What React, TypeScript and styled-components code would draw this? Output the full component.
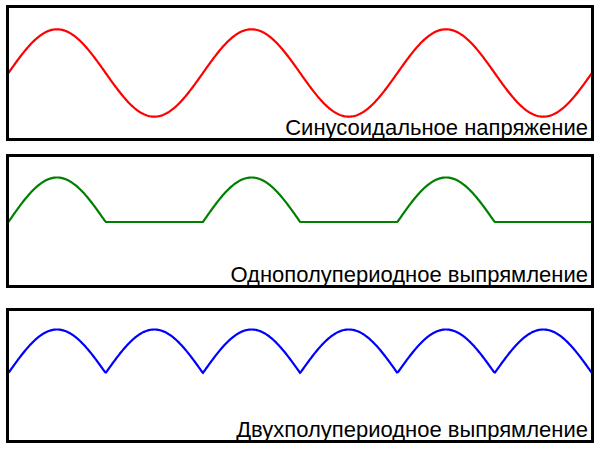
import React from 'react';
import styled, { createGlobalStyle } from 'styled-components';

const GlobalStyle = createGlobalStyle`
  html, body {
    margin: 0;
    padding: 0;
    background: #fff;
  }
  body {
    font-family: "Liberation Sans", Arial, sans-serif;
  }
`;

const Page = styled.div`
  width: 600px;
  height: 449px;
  padding: 5px 6px 0 6px;
  box-sizing: border-box;
  display: flex;
  flex-direction: column;
  background: #fff;
`;

const Panel = styled.div<{ $height: number; $gap: number }>`
  box-sizing: border-box;
  height: ${(p) => p.$height}px;
  margin-top: ${(p) => p.$gap}px;
  border: 3px solid #000;
  display: grid;
  grid-template-areas: 'stack';
  overflow: hidden;
`;

const Plot = styled.svg`
  grid-area: stack;
  display: block;
  width: 100%;
  height: 100%;
`;

const Caption = styled.div`
  grid-area: stack;
  align-self: end;
  justify-self: end;
  padding-right: 3px;
  font-size: 22px;
  line-height: 20px;
  color: #000;
  white-space: nowrap;
`;

type Mode = 'sine' | 'half' | 'full';

const PERIOD = 194.5;
const PHASE = 8.4;

// builds the polyline of one waveform in page coordinates
const wavePoints = (mode: Mode, center: number, amp: number) => {
  const pts: string[] = [];
  for (let x = 6; x <= 594; x += 1) {
    const s = Math.sin((2 * Math.PI * (x - PHASE)) / PERIOD);
    let y = center;
    if (mode === 'sine') y = center - amp * s;
    if (mode === 'half') y = center - amp * Math.max(0, s);
    if (mode === 'full') y = center - amp * Math.abs(s);
    pts.push(`${x},${y.toFixed(2)}`);
  }
  return pts.join(' ');
};

interface WaveProps {
  top: number;
  height: number;
  gap: number;
  mode: Mode;
  center: number;
  amp: number;
  color: string;
  label: string;
}

const Wave: React.FC<WaveProps> = ({ top, height, gap, mode, center, amp, color, label }) => {
  const innerTop = top + 3;
  const innerHeight = height - 6;
  return (
    <Panel $height={height} $gap={gap}>
      <Plot viewBox={`9 ${innerTop} 582 ${innerHeight}`} preserveAspectRatio="none">
        <polyline
          points={wavePoints(mode, center, amp)}
          fill="none"
          stroke={color}
          strokeWidth={2.2}
          strokeLinejoin="miter"
        />
      </Plot>
      <Caption>{label}</Caption>
    </Panel>
  );
};

export default function App() {
  return (
    <>
      <GlobalStyle />
      <Page>
        <Wave
          top={5}
          height={136}
          gap={0}
          mode="sine"
          center={73}
          amp={43.7}
          color="#ff0000"
          label="Синусоидальное напряжение"
        />
        <Wave
          top={154}
          height={134}
          gap={13}
          mode="half"
          center={222}
          amp={44.5}
          color="#008000"
          label="Однополупериодное выпрямление"
        />
        <Wave
          top={308}
          height={135}
          gap={20}
          mode="full"
          center={373}
          amp={43.5}
          color="#0000ff"
          label="Двухполупериодное выпрямление"
        />
      </Page>
    </>
  );
}
